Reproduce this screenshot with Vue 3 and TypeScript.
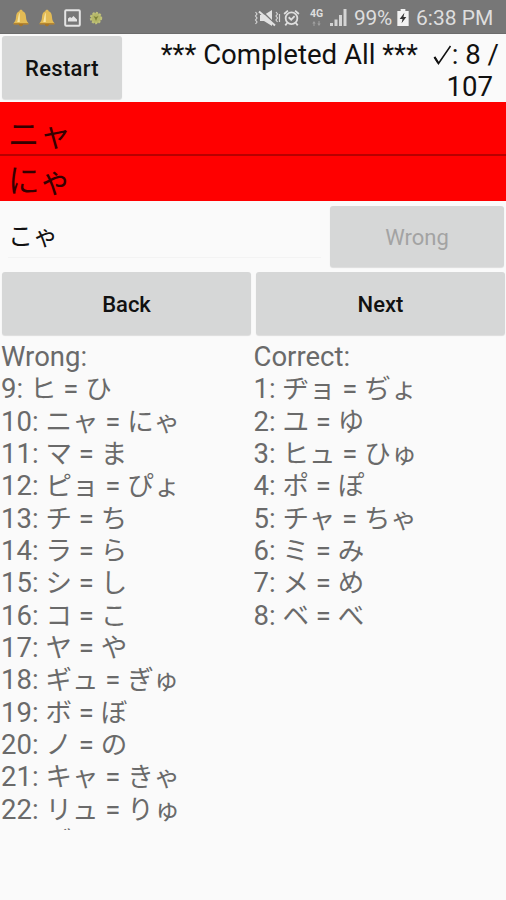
<script setup lang="ts">
interface Card {
  n: number
  katakana: string
  hiragana: string
}

const wrong: Card[] = [
  { n: 9, katakana: 'ヒ', hiragana: 'ひ' },
  { n: 10, katakana: 'ニャ', hiragana: 'にゃ' },
  { n: 11, katakana: 'マ', hiragana: 'ま' },
  { n: 12, katakana: 'ピョ', hiragana: 'ぴょ' },
  { n: 13, katakana: 'チ', hiragana: 'ち' },
  { n: 14, katakana: 'ラ', hiragana: 'ら' },
  { n: 15, katakana: 'シ', hiragana: 'し' },
  { n: 16, katakana: 'コ', hiragana: 'こ' },
  { n: 17, katakana: 'ヤ', hiragana: 'や' },
  { n: 18, katakana: 'ギュ', hiragana: 'ぎゅ' },
  { n: 19, katakana: 'ボ', hiragana: 'ぼ' },
  { n: 20, katakana: 'ノ', hiragana: 'の' },
  { n: 21, katakana: 'キャ', hiragana: 'きゃ' },
  { n: 22, katakana: 'リュ', hiragana: 'りゅ' },
  { n: 23, katakana: 'ブ', hiragana: 'ぶ' },
]

const correct: Card[] = [
  { n: 1, katakana: 'ヂョ', hiragana: 'ぢょ' },
  { n: 2, katakana: 'ユ', hiragana: 'ゆ' },
  { n: 3, katakana: 'ヒュ', hiragana: 'ひゅ' },
  { n: 4, katakana: 'ポ', hiragana: 'ぽ' },
  { n: 5, katakana: 'チャ', hiragana: 'ちゃ' },
  { n: 6, katakana: 'ミ', hiragana: 'み' },
  { n: 7, katakana: 'メ', hiragana: 'め' },
  { n: 8, katakana: 'ベ', hiragana: 'べ' },
]
</script>

<template>
  <div class="screen">
    <header class="status">
      <div class="notes">
        <svg v-for="i in 2" :key="i" class="bell" viewBox="0 0 16 18">
          <path d="M8 .8c-1 0-1.600.6-1.600 1.400C4 3 3.200 5 3 8c-.2 3-.8 4.300-2.300 6v1.200h14.600V14C13.800 12.300 13.200 11 13 8c-.2-3-1-5-3.400-5.800C9.600 1.400 9 .8 8 .8z" fill="#e3bb55" />
          <path d="M6.800 3.500C5.500 5 5.300 9 4.300 13h2.500z" fill="#f8e7a4" />
          <path d="M.7 14.200h14.600v1.200H.7zM6 15.400h4c0 2.400-4 2.400-4 0z" fill="#a77526" />
        </svg>
        <svg class="photo" viewBox="0 0 17 18">
          <rect x="1.200" y="1.200" width="14.600" height="15.600" rx="1" fill="none" stroke="#e4e4e4" stroke-width="2" />
          <path d="M4 12.500V9.500l2-1.500 1.500 1L9.500 7l3.500 3.500v2z" fill="#e4e4e4" />
        </svg>
        <svg class="flower" viewBox="0 0 14 14">
          <circle cx="7" cy="7" r="5.200" fill="#b5b768" stroke="#bfc17a" stroke-width="2" stroke-dasharray="2 1.400" />
          <path d="M4.500 5l2.500 1 2.500-1L8 7.500 7 10 6 7.500z" fill="#7c8038" />
        </svg>
      </div>
      <div class="system">
        <svg class="mute" viewBox="0 0 27 18">
          <path d="M6 6h4l8-5v16l-8-5H6z" fill="#e2e2e2" />
          <path d="M7 1l14 14" stroke="#777" stroke-width="1.500" />
          <path d="M5 2.500l16 14" stroke="#e2e2e2" stroke-width="2" />
          <path d="M1.500 3l1.500 2-1.500 2L3 9l-1.500 2L3 13l-1.500 2M22 3l1.500 2L22 7l1.500 2-1.500 2 1.500 2M25.500 5v8" fill="none" stroke="#d4d4d4" stroke-width="1.200" />
        </svg>
        <svg class="alarm" viewBox="0 0 18 18">
          <g fill="none" stroke="#dedede" stroke-width="1.900">
            <circle cx="9" cy="9.300" r="6.200" />
            <path d="M1.200 4.800l4-3.600M16.800 4.800l-4-3.600M4.600 14l-2.200 2.800M13.400 14l2.200 2.800M6 8.200l2.700 2.600L12.300 7" />
          </g>
        </svg>
        <div class="net">
          <span>4G</span>
          <svg viewBox="0 0 10 6"><path d="M0 3l2-3 2 3zM1.400 3h1.200v3H1.400zM6 3l2 3 2-3zM7.400 0h1.200v3H7.400z" fill="#a2a2a2" /></svg>
        </div>
        <svg class="signal" viewBox="0 0 17 17">
          <path d="M0 14h3v3H0zM4.500 10.500h3V17h-3zM9 6h3v11H9zM13.500 0h3v17h-3z" fill="#d4d4d4" />
        </svg>
        <span class="pct">99%</span>
        <svg class="battery" viewBox="0 0 12 18">
          <path d="M3.500 0h5v2H12v16H0V2h3.500z" fill="#f2f2f2" />
          <path d="M7.500 4L2.500 10.500h3L4.500 15l5-6.500h-3z" fill="#333" />
        </svg>
        <span class="time">6:38 PM</span>
      </div>
    </header>

    <section class="top">
      <button class="btn restart">Restart</button>
      <p class="summary"><span class="done">*** Completed All ***</span> <svg class="check" viewBox="0 0 19 20"><path d="M1.500 12l4 6.500L17.500 1" fill="none" stroke="#111" stroke-width="1.500" /><path d="M1.500 12l3.800 6" stroke="#111" stroke-width="2.200" /></svg>: 8 /<br><span class="total">107</span></p>
    </section>

    <div class="prompt first">ニャ</div>
    <div class="prompt second">にゃ</div>

    <section class="answer">
      <div class="field">こゃ</div>
      <button class="btn verdict" disabled>Wrong</button>
    </section>

    <nav class="nav">
      <button class="btn">Back</button>
      <button class="btn">Next</button>
    </nav>

    <main class="lists">
      <div class="list">
        <div>Wrong:</div>
        <div v-for="c in wrong" :key="c.n">{{ c.n }}: <span class="kana">{{ c.katakana }}</span> = <span class="kana">{{ c.hiragana }}</span></div>
      </div>
      <div class="list">
        <div>Correct:</div>
        <div v-for="c in correct" :key="c.n">{{ c.n }}: <span class="kana">{{ c.katakana }}</span> = <span class="kana">{{ c.hiragana }}</span></div>
      </div>
    </main>
  </div>
</template>

<style>
body {
  background: #fafafa;
}
</style>

<style scoped>
.screen {
  width: 506px;
  height: 900px;
  overflow: hidden;
  background: #fafafa;
  font-family: Roboto, 'Noto Sans CJK JP', sans-serif;
  color: #111;
}
.status {
  display: flex;
  justify-content: space-between;
  box-sizing: border-box;
  height: 34px;
  padding: 2px 12px 0 13px;
  background: #777;
  border-bottom: 1px solid #6c6c6c;
  color: #dedede;
}
.notes,
.system {
  display: flex;
  align-items: center;
}
.bell {
  width: 16px;
  height: 18px;
  margin-right: 10px;
}
.photo {
  width: 17px;
  height: 18px;
  margin-right: 8px;
  margin-left: -1px;
}
.flower {
  width: 14px;
  height: 14px;
}
.mute {
  width: 27px;
  height: 18px;
  margin-right: 2px;
}
.alarm {
  width: 17px;
  height: 18px;
  margin-right: 9px;
}
.net {
  display: flex;
  flex-direction: column;
  align-items: center;
  width: 15px;
  margin-right: 6px;
  font-size: 10.500px;
  font-weight: 700;
  line-height: 10px;
}
.net svg {
  width: 9px;
  height: 5px;
  margin-top: 2px;
}
.signal {
  width: 17px;
  height: 17px;
  margin-right: 7px;
}
.pct {
  width: 43px;
  padding-top: 1px;
  font-size: 20.800px;
  letter-spacing: -0.2px;
}
.battery {
  width: 12px;
  height: 17px;
  margin-right: 7px;
}
.time {
  width: 78px;
  padding-top: 1px;
  font-size: 21px;
  white-space: nowrap;
}
.top {
  display: flex;
  box-sizing: border-box;
  height: 68px;
  padding: 2px 7px 0 2px;
}
.btn {
  display: block;
  padding: 0;
  border: 0;
  border-radius: 3px;
  background: #d6d7d7;
  box-shadow: 0 1px 1px rgba(0, 0, 0, 0.12);
  color: #111;
  font: 500 22px Roboto, sans-serif;
}
.restart {
  width: 120px;
  height: 63px;
  padding-top: 2px;
  letter-spacing: 0.3px;
}
.summary {
  flex: 1;
  margin: 3px 0 0;
  font-size: 27.600px;
  line-height: 32.300px;
  text-align: right;
  white-space: nowrap;
}
.done {
  margin-right: 8px;
}
.check {
  width: 19px;
  height: 20px;
  vertical-align: -1px;
}
.total {
  margin-right: 6px;
}
.prompt {
  box-sizing: border-box;
  padding-left: 8px;
  background: #f00;
  color: #350000;
  font-family: 'Noto Sans CJK JP', sans-serif;
  font-size: 31.500px;
}
.first {
  height: 54px;
  padding-top: 7px;
  border-bottom: 2px solid #b80000;
  line-height: 46px;
}
.second {
  height: 45px;
  line-height: 45px;
}
.answer {
  display: flex;
  justify-content: space-between;
  height: 69px;
  padding: 5px 2px 0 8px;
  box-sizing: border-box;
}
.field {
  width: 313px;
  height: 51px;
  border-bottom: 1px solid #f3f3f3;
  font-family: 'Noto Sans CJK JP', sans-serif;
  font-size: 25px;
  line-height: 56px;
}
.verdict {
  width: 174px;
  height: 61px;
  padding-top: 2px;
  color: #a3a3a3;
  font-weight: 400;
}
.nav {
  display: grid;
  grid-template-columns: 1fr 1fr;
  gap: 5px;
  padding: 2px 1px 0 2px;
}
.nav .btn {
  height: 63px;
  padding-top: 1px;
}
.lists {
  display: grid;
  grid-template-columns: 1fr 1fr;
  box-sizing: border-box;
  height: 490px;
  margin-top: 5px;
  padding: 1px 0 0 1px;
  overflow: hidden;
  color: #6a6a6a;
  font-size: 27.500px;
}
.list > div {
  height: 32.350px;
  line-height: 32.350px;
  white-space: nowrap;
}
.kana {
  font-size: 26.500px;
  line-height: 1;
}
</style>
